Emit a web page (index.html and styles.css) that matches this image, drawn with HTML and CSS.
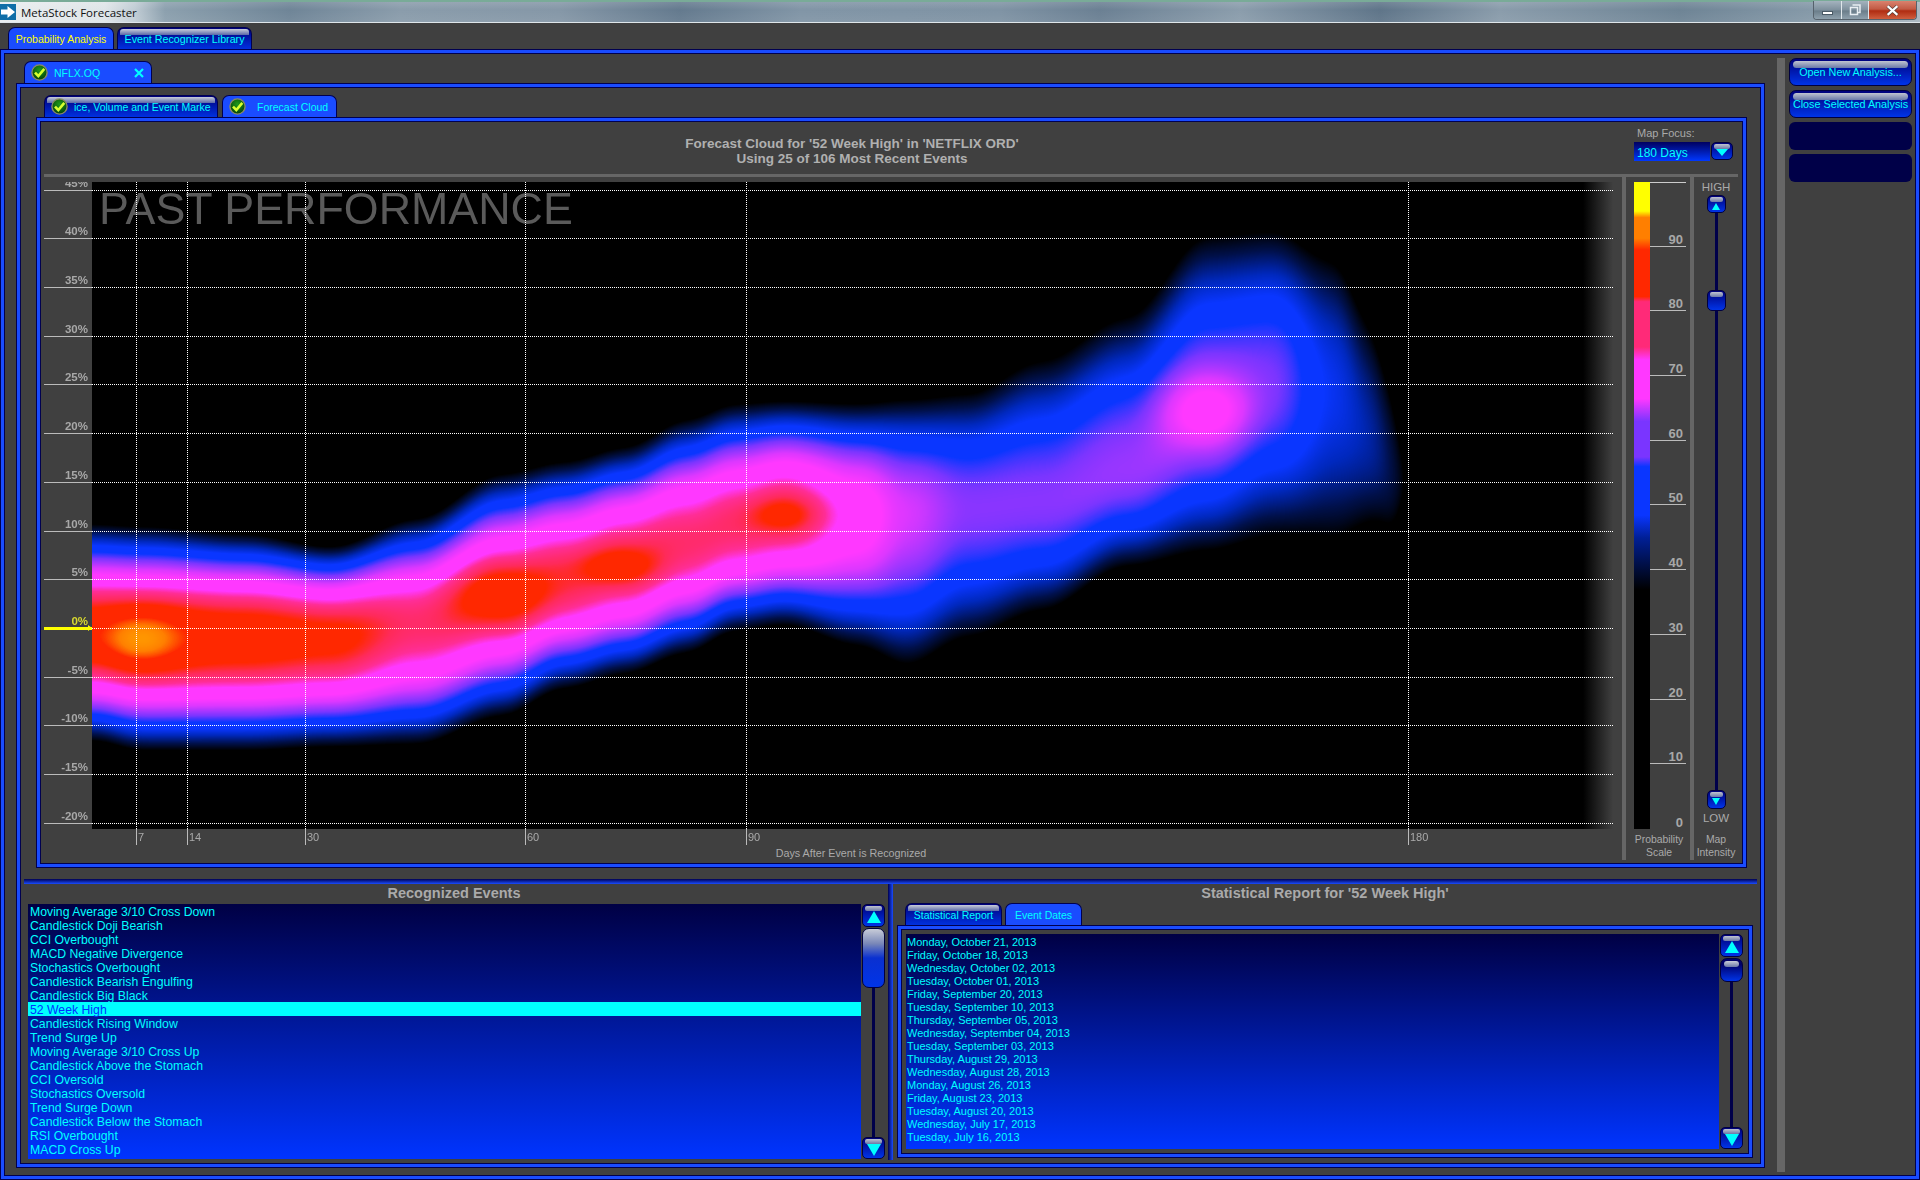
FILE: index.html
```html
<!DOCTYPE html>
<html lang="en">
<head>
<meta charset="utf-8">
<title>MetaStock Forecaster</title>
<link rel="stylesheet" href="styles.css">
</head>
<body>
<svg class="defs" width="0" height="0" aria-hidden="true">
  <defs>
    <radialGradient id="chk" cx="50%" cy="35%" r="70%"><stop offset="0" stop-color="#1f9a1a"/><stop offset="1" stop-color="#003a08"/></radialGradient>
    <symbol id="check" viewBox="0 0 17 17">
      <circle cx="8.5" cy="8.5" r="7.6" fill="url(#chk)" stroke="#8a8a62" stroke-width="1.4"/>
      <path d="M4 8.6 L7.3 12 L13.3 4.8" fill="none" stroke="#d8ff30" stroke-width="2.6"/>
    </symbol>
  </defs>
</svg>

<header class="titlebar">
  <svg class="app-icon" viewBox="0 0 16 16"><rect width="16" height="16" fill="#0f6ea8"/><path d="M1 5.5h6.5V2L15 8l-7.500 6v-3.500H1z" fill="#fff"/></svg>
  <span class="app-title">MetaStock Forecaster</span>
  <div class="winctl">
    <span class="wbtn wmin"><i></i></span>
    <span class="wbtn wmax"><svg viewBox="0 0 12 12" width="12" height="12"><path d="M3.500 1h7.500v7.500H8.500M1.500 3.500h7v7h-7z" fill="none" stroke="#e8eef2" stroke-width="1.500"/></svg></span>
    <span class="wbtn wclose"><svg viewBox="0 0 12 10" width="13" height="11"><path d="M1.500 1l9 8M10.500 1l-9 8" stroke="#4a3a36" stroke-width="3.200"/><path d="M1.500 1l9 8M10.500 1l-9 8" stroke="#fff" stroke-width="2"/></svg></span>
  </div>
</header>

<nav class="tabs toptabs">
  <span class="tab active gold w106">Probability Analysis</span>
  <span class="tab w135">Event Recognizer Library</span>
</nav>

<div class="outer">
  <div class="main">
    <nav class="tabs symtabs">
      <span class="tab active w128 sym"><svg class="chk"><use href="#check"/></svg><b class="sym-name">NFLX.OQ</b><svg class="x" viewBox="0 0 10 10"><path d="M1 1l8 8M9 1l-8 8" stroke="#00ffff" stroke-width="2.200"/></svg></span>
    </nav>
    <section class="frame f2">
      <div class="upper">
        <nav class="tabs subtabs">
          <span class="tab w174 clip"><svg class="chk"><use href="#check"/></svg><b class="clipt">ice, Volume and Event Marke</b></span>
          <span class="tab active w115 clip"><svg class="chk"><use href="#check"/></svg><b class="fc">Forecast Cloud</b></span>
        </nav>
        <section class="frame f3">
          <header class="chart-head">
            <h1 class="chart-title">Forecast Cloud for '52 Week High' in 'NETFLIX ORD'<br>Using 25 of 106 Most Recent Events</h1>
            <div class="focus">
              <label class="focus-label">Map Focus:</label>
              <div class="focus-row">
                <span class="combo">180 Days</span>
                <span class="gbtn combo-btn"><i class="tri down"></i></span>
              </div>
            </div>
          </header>
          <div class="hbar"></div>
          <div class="chart-row">
            <div class="plotcol">
              <div class="chart">
                <canvas id="heat" width="1521" height="647"></canvas>
                <div class="fade"></div>
                <div class="watermark">PAST PERFORMANCE</div>
                <div class="yrows">
                  <div class="yrow first"><span class="yl">45%</span><span class="yd"></span></div>
                  <div class="yrow"><span class="yl">40%</span><span class="yd"></span></div>
                  <div class="yrow"><span class="yl">35%</span><span class="yd"></span></div>
                  <div class="yrow"><span class="yl">30%</span><span class="yd"></span></div>
                  <div class="yrow"><span class="yl">25%</span><span class="yd"></span></div>
                  <div class="yrow"><span class="yl">20%</span><span class="yd"></span></div>
                  <div class="yrow"><span class="yl">15%</span><span class="yd"></span></div>
                  <div class="yrow"><span class="yl">10%</span><span class="yd"></span></div>
                  <div class="yrow"><span class="yl">5%</span><span class="yd"></span></div>
                  <div class="yrow zero"><span class="yl">0%</span><span class="yd"></span></div>
                  <div class="yrow"><span class="yl">-5%</span><span class="yd"></span></div>
                  <div class="yrow"><span class="yl">-10%</span><span class="yd"></span></div>
                  <div class="yrow"><span class="yl">-15%</span><span class="yd"></span></div>
                  <div class="yrow"><span class="yl">-20%</span><span class="yd"></span></div>
                </div>
                <i class="vline" style="left:92px"></i>
                <i class="vline" style="left:143px"></i>
                <i class="vline" style="left:261px"></i>
                <i class="vline" style="left:481px"></i>
                <i class="vline" style="left:702px"></i>
                <i class="vline" style="left:1364px"></i>
              </div>
              <div class="xaxis">
                <span class="xt" style="left:92px">7</span>
                <span class="xt" style="left:143px">14</span>
                <span class="xt" style="left:261px">30</span>
                <span class="xt" style="left:481px">60</span>
                <span class="xt" style="left:702px">90</span>
                <span class="xt" style="left:1364px">180</span>
              </div>
              <div class="xtitle">Days After Event is Recognized</div>
            </div>
            <div class="vbar"></div>
            <div class="scalecol">
              <div class="scale">
                <div class="ramp"></div>
                <div class="sticks">
                  <span class="st">90</span><span class="st">80</span><span class="st">70</span><span class="st">60</span><span class="st">50</span><span class="st">40</span><span class="st">30</span><span class="st">20</span><span class="st">10</span><span class="st last">0</span>
                </div>
              </div>
              <div class="caption">Probability<br>Scale</div>
            </div>
            <div class="vbar"></div>
            <div class="slidercol">
              <span class="hl">HIGH</span>
              <span class="gbtn sb"><i class="tri up small"></i></span>
              <div class="strack"><span class="gbtn sthumb"></span></div>
              <span class="gbtn sb2"><i class="tri down small"></i></span>
              <span class="hl low">LOW</span>
              <div class="caption">Map<br>Intensity</div>
            </div>
          </div>
        </section>
      </div>
      <div class="sep"></div>
      <div class="lower">
        <section class="pane-left">
          <h2 class="ptitle lt">Recognized Events</h2>
          <div class="listwrap">
            <ul class="list l14">
              <li>Moving Average 3/10 Cross Down</li>
              <li>Candlestick Doji Bearish</li>
              <li>CCI Overbought</li>
              <li>MACD Negative Divergence</li>
              <li>Stochastics Overbought</li>
              <li>Candlestick Bearish Engulfing</li>
              <li>Candlestick Big Black</li>
              <li class="sel">52 Week High</li>
              <li>Candlestick Rising Window</li>
              <li>Trend Surge Up</li>
              <li>Moving Average 3/10 Cross Up</li>
              <li>Candlestick Above the Stomach</li>
              <li>CCI Oversold</li>
              <li>Stochastics Oversold</li>
              <li>Trend Surge Down</li>
              <li>Candlestick Below the Stomach</li>
              <li>RSI Overbought</li>
              <li>MACD Cross Up</li>
            </ul>
            <div class="scroll">
              <span class="gbtn sc-up"><i class="tri up"></i></span>
              <span class="sc-thumb big"></span>
              <span class="sc-track"></span>
              <span class="gbtn sc-dn"><i class="tri down"></i></span>
            </div>
          </div>
        </section>
        <div class="splitter"></div>
        <section class="pane-right">
          <h2 class="ptitle rt">Statistical Report for '52 Week High'</h2>
          <nav class="tabs rtabs">
            <span class="tab w97">Statistical Report</span>
            <span class="tab active w77">Event Dates</span>
          </nav>
          <div class="frame f4">
            <ul class="list l13">
              <li>Monday, October 21, 2013</li>
              <li>Friday, October 18, 2013</li>
              <li>Wednesday, October 02, 2013</li>
              <li>Tuesday, October 01, 2013</li>
              <li>Friday, September 20, 2013</li>
              <li>Tuesday, September 10, 2013</li>
              <li>Thursday, September 05, 2013</li>
              <li>Wednesday, September 04, 2013</li>
              <li>Tuesday, September 03, 2013</li>
              <li>Thursday, August 29, 2013</li>
              <li>Wednesday, August 28, 2013</li>
              <li>Monday, August 26, 2013</li>
              <li>Friday, August 23, 2013</li>
              <li>Tuesday, August 20, 2013</li>
              <li>Wednesday, July 17, 2013</li>
              <li>Tuesday, July 16, 2013</li>
            </ul>
            <div class="scroll">
              <span class="gbtn sc-up"><i class="tri up"></i></span>
              <span class="sc-thumb small"></span>
              <span class="sc-track"></span>
              <span class="gbtn sc-dn"><i class="tri down"></i></span>
            </div>
          </div>
        </section>
      </div>
    </section>
  </div>
  <aside class="side">
    <div class="sidebar"></div>
    <div class="sidebtns">
      <span class="gbtn sbtn">Open New Analysis...</span>
      <span class="gbtn sbtn">Close Selected Analysis</span>
      <span class="sbtn off"></span>
      <span class="sbtn off"></span>
    </div>
  </aside>
</div>
<script src="heat.js"></script>
</body>
</html>
```
FILE: styles.css
```css
* { box-sizing: border-box; }
html, body { margin: 0; height: 1180px; overflow: hidden; }
body { background: #404040; font-family: "Liberation Sans", Arial, sans-serif; font-size: 12px; color: #aaa; }
.defs { position: absolute; }
ul { list-style: none; margin: 0; padding: 0; }
h1, h2 { margin: 0; }

/* title bar */
.titlebar { height: 23px; display: flex; align-items: center; border-top: 2px solid #79ab98; border-bottom: 1px solid #dfe6ea;
  background: linear-gradient(rgba(255,255,255,.12), rgba(255,255,255,0) 40%, rgba(255,255,255,.06)),
    linear-gradient(90deg, #e9edef 0, #dfe5e8 105px, #c0ccd4 135px, #8ca0ae 165px, #6f8597 290px, #8a9cab 400px, #8597a7 560px, #647a8e 680px, #8195a6 800px, #7f93a4 1000px, #6b8093 1100px, #8b9dac 1240px, #5f7589 1380px, #8a9cab 1500px, #6e8495 1680px, #8599a8 1810px, #a9b6bf 1920px); }
.app-icon { width: 16px; height: 16px; margin-top: -1px; }
.app-title { margin-left: 5px; padding-top: 1px; font-family: "Open Sans", "Liberation Sans", sans-serif; font-size: 11.500px; color: #111; }
.winctl { margin-left: auto; margin-right: 3px; align-self: flex-start; display: flex; height: 19px; margin-top: -1px; border: 1px solid #56626c; border-top: 0; border-radius: 0 0 4px 4px; overflow: hidden; }
.wbtn { display: flex; align-items: center; justify-content: center; background: linear-gradient(#a4b3be 0, #7d8f9c 50%, #6a7d8a 55%, #8fa1ad 100%); border-right: 1px solid #dfe6ea; }
.wmin { width: 28px; } .wmax { width: 27px; }
.wclose { width: 47px; border: 0; background: linear-gradient(#d9826e 0, #c25a44 45%, #b02c12 55%, #cf5e3e 100%); }
.wmin i { display: block; width: 11px; height: 4px; margin-top: 5px; background: #fff; border: 1px solid #4a5a66; }

/* tabs */
.tabs { display: flex; height: 22px; gap: 3px; }
.toptabs { margin: 4px 0 0 8px; }
.symtabs { padding-left: 8px; }
.subtabs { padding-left: 8px; gap: 4px; }
.rtabs { padding-left: 8px; margin-top: -1px; }
.tab { position: relative; display: flex; align-items: center; justify-content: center; color: #00ffff; font-size: 10.500px; white-space: nowrap; overflow: hidden;
  border: 1px solid #000050; border-bottom: 0; border-radius: 7px 7px 0 0;
  background: linear-gradient(#00007a 0, #0030e0 100%); }
.tab::before { content: ""; position: absolute; left: 2px; right: 2px; top: 1px; height: 6px; border-radius: 3px 3px 0 0; background: linear-gradient(#c8ccd8, #5a68a8); }
.tab.active { background: #1a4cff; }
.tab.active::before { display: none; }
.gold { color: #ffff00; }
.w106 { width: 106px; } .w135 { width: 135px; font-size: 10.700px; } .w128 { width: 128px; } .w174 { width: 174px; } .w115 { width: 115px; } .w97 { width: 97px; } .w77 { width: 77px; }
.tab b { font-weight: normal; position: relative; }
.sym { justify-content: flex-start; padding-left: 6px; }
.chk { width: 17px; height: 17px; flex: none; position: relative; z-index: 1; }
.sym-name { margin-left: 6px; }
.x { width: 10px; height: 10px; margin-left: auto; margin-right: 7px; }
.clip { justify-content: flex-start; padding-left: 6px; }
.clipt { margin-left: 6px; }
.fc { margin-left: 11px; }

/* frames: navy / blue / navy */
.frame { border: 1px solid #000050; box-shadow: inset 0 0 0 3px #1a4cff, inset 0 0 0 4px #000050; background: #404040; }

.outer { display: flex; gap: 12px; height: 1131px; padding: 8px 7px 7px 15px; border: 1px solid #000050; box-shadow: inset 0 0 0 3px #1a4cff, inset 0 0 0 4px #000050; }
.main { width: 1749px; padding-top: 3px; flex: none; display: flex; flex-direction: column; }
.side { flex: 1; display: flex; gap: 4px; }
.sidebar { width: 8px; background: #666; }
.sidebtns { flex: 1; display: flex; flex-direction: column; gap: 4px; }
.f2 { height: 1085px; padding: 11px 7px 0 7px; }
.upper { margin: 0 10px 0 12px; }

.f3 { height: 751px; padding: 4px; }
.chart-head { height: 52px; display: grid; grid-template-columns: 1590px 1fr; }
.chart-title { padding: 14px 0 0 32px; font-size: 13.500px; line-height: 15px; text-align: center; font-weight: bold; color: #b0b0b0; }
.focus { padding: 4px 0 0 3px; }
.focus-label { display: block; font-size: 11px; line-height: 14px; padding-left: 3px; color: #aaa; }
.focus-row { display: flex; gap: 1px; margin-top: 2px; }
.combo { width: 76px; height: 19px; line-height: 22px; padding-left: 3px; font-size: 12px; color: #00ffff; background: linear-gradient(#000060, #0038ff); }
.combo-btn { width: 22px; height: 18px; }
.hbar { height: 3px; margin: 0 4px 0 3px; background: #666; }
.chart-row { display: flex; height: 683px; padding: 0 4px 0 3px; }
.plotcol { width: 1578px; padding-top: 5px; }
.chart { position: relative; width: 1569px; height: 647px; overflow: hidden; }
#heat { position: absolute; left: 48px; top: 0; width: 1521px; height: 647px; display: block; }
.fade { position: absolute; left: 1539px; top: 0; width: 30px; height: 647px; background: linear-gradient(90deg, rgba(64,64,64,0), #404040); }
.watermark { position: absolute; left: 55px; top: 1px; font-size: 44.800px; line-height: 50px; color: #5a5a5a; white-space: nowrap; }
.yrows { position: absolute; inset: 0; display: flex; flex-direction: column; }
.yrow { display: flex; height: 48.700px; flex: none; }
.yrow.first { height: 8.700px; }
.yl { width: 48px; border-bottom: 1px solid #bbb; display: flex; align-items: flex-end; justify-content: flex-end; padding: 0 4px 1px 0; font-size: 11.500px; line-height: 11px; font-weight: bold; color: #a8a8a8; }
.yd { flex: 1; border-bottom: 1px dotted #fff; }
.zero .yl { position: relative; color: #d8d830; border-bottom: 3px solid #ffff00; margin-bottom: -1px; padding-bottom: 0; }
.zero .yl::after { content: ""; position: absolute; right: 0; bottom: -4px; border: 3px solid transparent; border-left: 4px solid #ffff00; border-right: 0; }
.vline { position: absolute; top: 0; height: 647px; width: 1px; border-left: 1px dotted #fff; }
.xaxis { position: relative; height: 16px; }
.xt { position: absolute; top: 0; height: 16px; border-left: 1px solid #bbb; padding-left: 1px; line-height: 16px; font-size: 11px; color: #aaa; }
.xtitle { padding-left: 36px; text-align: center; font-size: 10.750px; line-height: 14px; margin-top: 1px; color: #aaa; }
.vbar { width: 4px; background: #666; }

.scalecol { width: 64px; padding: 5px 0 0 8px; }
.scale { display: flex; width: 52px; height: 647px; border-top: 1px solid #ccc; }
.ramp { width: 16px; margin-top: -1px; background: linear-gradient(0deg, #000 0, #000 37%, #00104a 41%, #001f96 45%, #0a36ff 48.500%, #0a36ff 56%, #7a35ff 57.500%, #7a35ff 63%, #ff38ff 66.500%, #ff38ff 72.500%, #ff2a78 74.500%, #ff2a78 81.500%, #ff2800 82.300%, #ff2800 89.500%, #ff7f00 91.300%, #ff7f00 94.500%, #ffff00 95.500%, #ffff00 100%); }
.sticks { flex: 1; display: flex; flex-direction: column; }
.st { flex: none; height: 64.700px; display: flex; align-items: flex-end; justify-content: flex-end; border-bottom: 1px solid #bbb; padding-right: 3px; font-size: 13px; line-height: 12px; font-weight: bold; color: #a8a8a8; }
.st:first-child { height: 63.700px; }
.st.last { border: 0; }
.caption { text-align: center; font-size: 10.400px; line-height: 13px; color: #aaa; margin-top: 4px; margin-left: -7px; width: 64px; }
.slidercol { width: 44px; padding-top: 3px; display: flex; flex-direction: column; align-items: center; }
.hl { height: 15px; line-height: 15px; font-size: 11.500px; color: #aaa; }
.hl.low { margin-top: 2px; }
.slidercol .caption { margin: 7px 0 0; width: 44px; }
.sb { width: 19px; height: 18px; }
.sb2 { width: 19px; height: 19px; }
.strack { position: relative; flex: none; width: 3px; height: 577px; background: #00004a; }
.sthumb { position: absolute; left: -8px; top: 77px; width: 19px; height: 21px; }

/* glossy buttons */
.gbtn { position: relative; display: flex; align-items: center; justify-content: center; flex: none; border: 1px solid #000040; border-radius: 5px; background: linear-gradient(#00007a, #0034e8); color: #00ffff; }
.gbtn::before { content: ""; position: absolute; left: 2px; right: 2px; top: 1px; height: 5px; border-radius: 2px; background: linear-gradient(#c0c4d0, #6a78a8); }
.tri { position: relative; display: block; width: 0; height: 0; border-left: 7px solid transparent; border-right: 7px solid transparent; }
.tri.up { border-bottom: 12px solid #00ffff; margin-top: 3px; }
.tri.down { border-top: 12px solid #00ffff; margin-top: 4px; }
.tri.small { border-left-width: 4px; border-right-width: 4px; }
.tri.small.up { border-bottom-width: 7px; margin-top: 4px; }
.tri.small.down { border-top-width: 7px; margin-top: 4px; }
.combo-btn .tri { border-left-width: 6px; border-right-width: 6px; border-top-width: 7px; margin-top: 3px; }

.sep { height: 5px; margin-top: 11px; background: linear-gradient(#000050, #1a4cff); }
.lower { display: flex; height: 276px; }
.pane-left { width: 864px; padding-left: 4px; }
.ptitle { height: 20px; font-size: 14.500px; line-height: 19px; text-align: center; font-weight: bold; color: #aaa; white-space: nowrap; }
.lt { padding-right: 8px; }
.listwrap { display: flex; height: 255px; gap: 1px; }
.list { color: #00ffff; background: linear-gradient(#000044, #0034ff); overflow: hidden; white-space: nowrap; }
.l14 { width: 833px; }
.l14 li { height: 14px; line-height: 17px; padding-left: 2px; font-size: 12.250px; }
.l14 li.sel { background: #00ffff; color: #0034ff; }
.scroll { width: 23px; display: flex; flex-direction: column; align-items: center; }
.sc-up { width: 23px; height: 23px; }
.sc-dn { width: 23px; height: 22px; }
.sc-thumb { display: block; flex: none; width: 23px; margin-top: 1px; border: 1px solid #000040; border-radius: 7px; }
.sc-thumb.big { height: 60px; background: linear-gradient(#c8ccd8 0, #7a88b8 25%, #0a30d0 50%, #0034e8 100%); }
.sc-thumb.small { height: 24px; position: relative; background: linear-gradient(#00006a 25%, #0034e8 100%); }
.sc-thumb.small::before { content: ""; position: absolute; left: 3px; right: 3px; top: 2px; height: 6px; border-radius: 3px; background: linear-gradient(#c8ccd8, #6a78a8); }
.sc-track { flex: 1; width: 3px; background: #00004a; }
.splitter { width: 5px; background: linear-gradient(90deg, #000050, #1a4cff); height: 276px; }
.pane-right { width: 860px; padding-left: 4px; }
.f4 { width: 856px; height: 233px; padding: 8px 9px 8px 8px; display: flex; gap: 1px; }
.l13 { width: 815px; padding-top: 1px; }
.l13 li { height: 13px; line-height: 15px; padding-left: 1px; font-size: 11px; }

.sbtn { width: 123px; height: 28px; font-size: 10.800px; white-space: nowrap; }
.sbtn.gbtn { border-radius: 7px; }
.sbtn.gbtn::before { left: 3px; right: 3px; top: 2px; height: 7px; border-radius: 4px; }
.off { display: block; background: #000048; border-radius: 6px; }
```
FILE: heat.js
```js
// Forecast-cloud heat map: a probability field evaluated per pixel and coloured with the Probability Scale ramp.
(function () {
  var S = 1.2245, X0 = 92, Y0 = 182;
  var cv = document.getElementById('heat');
  var W = cv.width, H = cv.height;
  var ctx = cv.getContext('2d');
  // ridge: x, centre y, half-width above, half-width below (to the v=40 contour), peak (reference coords)
  var K = [
    [40, 518, 86, 82, 88], [75, 518, 86, 82, 88], [115, 520, 86, 88, 89], [200, 520, 80, 88, 88], [270, 520, 70, 85, 86],
    [340, 510, 82, 92, 80], [410, 487, 95, 92, 82], [460, 472, 90, 85, 81], [510, 460, 90, 85, 82], [560, 443, 95, 85, 80],
    [600, 430, 95, 80, 80], [640, 420, 88, 85, 81], [700, 420, 85, 100, 72], [740, 418, 85, 115, 64], [790, 415, 85, 95, 59],
    [850, 410, 105, 80, 59], [920, 385, 115, 70, 60], [985, 340, 135, 100, 61], [1040, 310, 110, 115, 58], [1090, 320, 90, 100, 49],
    [1120, 360, 70, 50, 45], [1140, 392, 20, 15, 40], [1160, 395, 5, 5, 30], [1220, 395, 1, 1, 20]
  ];
  // local hot spots: x, y, rx, ry, amplitude (reference coords)
  var B = [
    [115, 522, 32, 24, 7], [410, 485, 42, 25, 7], [505, 462, 32, 12, 7], [640, 420, 28, 12, 7], [985, 335, 35, 28, 11]
  ];
  function interp(x, i) {
    if (x <= K[0][0]) return K[0][i];
    for (var k = 0; k < K.length - 1; k++) {
      if (x <= K[k + 1][0]) {
        var t = (x - K[k][0]) / (K[k + 1][0] - K[k][0]);
        t = t * t * (3 - 2 * t);
        return K[k][i] + (K[k + 1][i] - K[k][i]) * t;
      }
    }
    return K[K.length - 1][i];
  }
  var stops = [
    [0, 0, 0, 0], [37, 0, 0, 0], [41, 0, 16, 74], [46, 0, 40, 190], [50, 10, 54, 255], [54, 10, 54, 255],
    [58, 122, 53, 255], [64, 220, 55, 255], [68, 255, 56, 255], [74, 255, 56, 255], [77, 255, 45, 150], [81, 255, 42, 90],
    [84, 255, 40, 0], [90, 255, 40, 0], [93, 255, 127, 0], [95, 255, 150, 0], [97, 255, 255, 0], [100, 255, 255, 0]
  ];
  var lut = [];
  for (var n = 0; n <= 1000; n++) {
    var v = n / 10, s = 0;
    while (s < stops.length - 2 && v > stops[s + 1][0]) s++;
    var a = stops[s], b = stops[s + 1], t = Math.min(1, (v - a[0]) / (b[0] - a[0]));
    lut.push([a[1] + (b[1] - a[1]) * t, a[2] + (b[2] - a[2]) * t, a[3] + (b[3] - a[3]) * t]);
  }
  var f = new Float32Array(W * H);
  for (var x = 0; x < W; x++) {
    var rx = (x + X0) / S;
    var yc = interp(rx, 1), wt = interp(rx, 2), wb = interp(rx, 3), pk = interp(rx, 4);
    var lg = Math.log(Math.max(pk, 40.5) / 40);
    for (var y = 0; y < H; y++) {
      var ry = (y + Y0) / S, d = ry - yc, w = d < 0 ? wt : wb;
      var val = pk * Math.exp(-lg * Math.pow(Math.abs(d) / w, 2));
      for (var q = 0; q < B.length; q++) {
        var h = B[q], ex = (rx - h[0]) / h[2], ey = (ry - h[1]) / h[3];
        val += h[4] * Math.exp(-(ex * ex + ey * ey));
      }
      f[y * W + x] = val;
    }
  }
  // smooth the field so the contours stay soft
  function blur(src, r) {
    var dst = new Float32Array(W * H), xx, yy, k, sum, n2 = 2 * r + 1;
    for (yy = 0; yy < H; yy++) {
      sum = 0;
      for (k = -r; k <= r; k++) sum += src[yy * W + Math.max(0, Math.min(W - 1, k))];
      for (xx = 0; xx < W; xx++) {
        dst[yy * W + xx] = sum / n2;
        sum += src[yy * W + Math.min(W - 1, xx + r + 1)] - src[yy * W + Math.max(0, xx - r)];
      }
    }
    var out = new Float32Array(W * H);
    for (xx = 0; xx < W; xx++) {
      sum = 0;
      for (k = -r; k <= r; k++) sum += dst[Math.max(0, Math.min(H - 1, k)) * W + xx];
      for (yy = 0; yy < H; yy++) {
        out[yy * W + xx] = sum / n2;
        sum += dst[Math.min(H - 1, yy + r + 1) * W + xx] - dst[Math.max(0, yy - r) * W + xx];
      }
    }
    return out;
  }
  f = blur(blur(blur(f, 7), 7), 7);
  var img = ctx.createImageData(W, H), px = img.data;
  for (var i = 0; i < f.length; i++) {
    var c = lut[Math.max(0, Math.min(1000, Math.round(f[i] * 10)))];
    px[i * 4] = c[0]; px[i * 4 + 1] = c[1]; px[i * 4 + 2] = c[2]; px[i * 4 + 3] = 255;
  }
  ctx.putImageData(img, 0, 0);
})();
```
